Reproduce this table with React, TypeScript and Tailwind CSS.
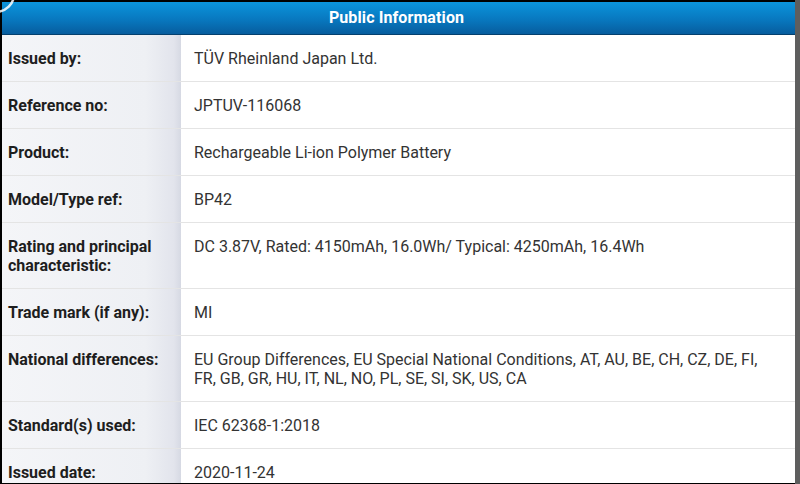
import React from "react";

const rows: { label: string; value: string }[] = [
  { label: "Issued by:", value: "TÜV Rheinland Japan Ltd." },
  { label: "Reference no:", value: "JPTUV-116068" },
  { label: "Product:", value: "Rechargeable Li-ion Polymer Battery" },
  { label: "Model/Type ref:", value: "BP42" },
  {
    label: "Rating and principal characteristic:",
    value: "DC 3.87V, Rated: 4150mAh, 16.0Wh/ Typical: 4250mAh, 16.4Wh",
  },
  { label: "Trade mark (if any):", value: "MI" },
  {
    label: "National differences:",
    value:
      "EU Group Differences, EU Special National Conditions, AT, AU, BE, CH, CZ, DE, FI, FR, GB, GR, HU, IT, NL, NO, PL, SE, SI, SK, US, CA",
  },
  { label: "Standard(s) used:", value: "IEC 62368-1:2018" },
  { label: "Issued date:", value: "2020-11-24" },
];

export default function App() {
  return (
    <div
      className="relative w-[800px] h-[484px] overflow-hidden bg-black"
      style={{ fontFamily: "Roboto, 'Noto Sans', sans-serif" }}
    >
      <div className="absolute left-[2px] top-[2px] right-[5px] bottom-[1px] flex flex-col bg-white overflow-hidden">
        <div className="h-[33px] shrink-0 flex items-center justify-center bg-[linear-gradient(to_bottom,#0b94dc,#0878bf_55%,#075d9e)] border-b border-[#04406e]">
          <span className="text-white font-bold text-[16px] tracking-[0.1px] -ml-[4px]">Public Information</span>
        </div>
        {rows.map((r, i) => (
          <div key={i} className="flex shrink-0 border-b border-[#e4e4e4] last:border-b-0">
            <div className="w-[179px] shrink-0 pl-[6px] pr-2 pt-[14px] pb-[13px] bg-[linear-gradient(to_right,#f4f5f8,#eef0f4_80%,#e2e4ec_96%,#d6d9e3)] text-[16px] leading-[19px] font-bold text-[#1e1e1e]">
              {r.label}
            </div>
            <div className="flex-1 pl-[13px] pr-[20px] pt-[14px] pb-[13px] text-[16px] leading-[19px] text-[#333]">
              {r.value}
            </div>
          </div>
        ))}
      </div>
      <div className="absolute right-0 top-0 bottom-0 w-[5px] bg-[#5e5e5e]" />
      <svg className="absolute left-0 top-0" width="30" height="30" viewBox="0 0 30 30">
        <circle cx="-4" cy="-6" r="18" fill="none" stroke="white" strokeWidth="2.5" opacity="0.85" />
      </svg>
    </div>
  );
}
